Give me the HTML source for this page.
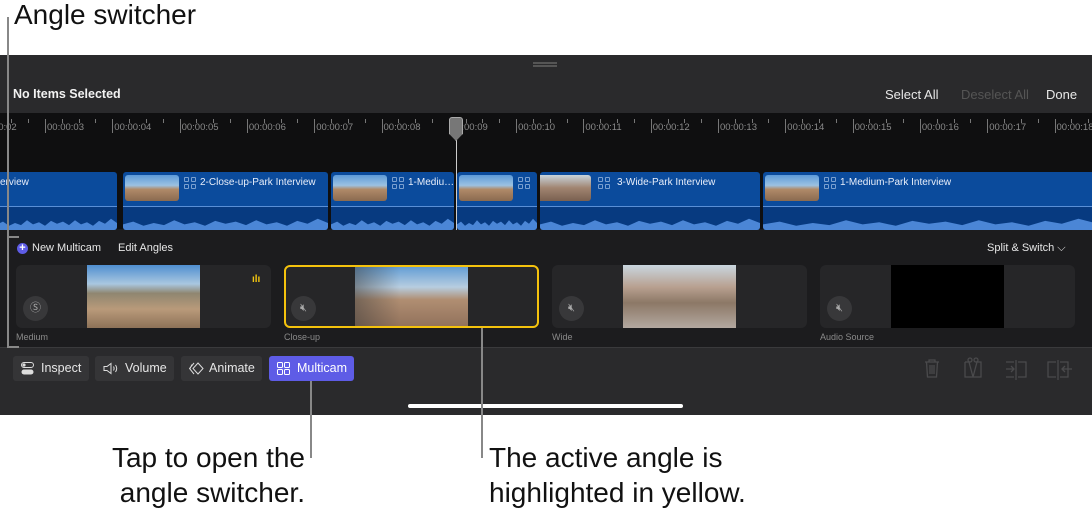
<!DOCTYPE html>
<html><head><meta charset="utf-8"><style>
*{margin:0;padding:0;box-sizing:border-box}
body{width:1092px;height:522px;background:#fff;position:relative;overflow:hidden;font-family:"Liberation Sans",sans-serif}
.a{position:absolute}
.ann{font-size:28px;color:#111;line-height:35px}
.tick{position:absolute;top:119px;width:1px;height:14px;background:#777}
.tl{position:absolute;top:122px;font-size:9.5px;color:#8a8a8a}
.clip{position:absolute;top:172px;height:58px;background:#0b4b9c;border-radius:3px;overflow:hidden}
.clip .wv{position:absolute;left:0;right:0;top:34px;bottom:0;background:#073a80;border-top:1px solid #5a8fd6}
.clip .wv i{position:absolute;left:0;right:0;bottom:0;height:14px;background:#4b86d6;clip-path:polygon(0 60%,5% 40%,10% 70%,15% 50%,20% 65%,25% 30%,30% 60%,35% 45%,40% 70%,45% 35%,50% 55%,55% 40%,60% 65%,65% 30%,70% 60%,75% 45%,80% 70%,85% 35%,90% 55%,95% 20%,100% 50%,100% 100%,0 100%)}
.thumb{position:absolute;top:3px;width:54px;height:26px;border-radius:3px;background:linear-gradient(#5d9ad8 0%,#9cc2e2 40%,#b08a68 55%,#8a6a50 100%)}
.ct{position:absolute;top:5px;font-size:10px;color:#e8eefa;white-space:nowrap}
.gi{position:absolute;top:5px;width:12px;height:12px;display:grid;grid-template-columns:5px 5px;gap:2px}
.gi b{border:1px solid #7aa0d0;border-radius:1px}
.card{position:absolute;top:265px;width:255px;height:63px;background:#262628;border-radius:6px;overflow:hidden}
.card .im{position:absolute;left:71px;top:0;width:113px;height:63px}
.card .mb{position:absolute;left:7px;top:31px;width:25px;height:25px;border-radius:50%;background:#38383a;color:#aaa;font-size:11px;text-align:center;line-height:25px}
.lab{position:absolute;top:332px;font-size:9px;color:#8a8a8a}
.btn{position:absolute;top:356px;height:25px;border-radius:3px;background:#353537;color:#e6e6e6;font-size:12.5px;line-height:25px;padding-left:28px}
.btn svg{position:absolute;left:8px;top:6px}
</style></head><body>
<div class="a ann" style="left:14px;top:-3px">Angle switcher</div>

<div class="a" style="left:0;top:55px;width:1092px;height:360px;background:#2a2a2c"></div>
<div class="a" style="left:533px;top:62px;width:24px;height:2px;background:#555;box-shadow:0 3px 0 #555"></div>
<div class="a" style="left:13px;top:87px;font-size:12.5px;font-weight:bold;color:#f2f2f2">No Items Selected</div>
<div class="a" style="left:885px;top:87px;font-size:13px;color:#e8e8e8">Select All</div>
<div class="a" style="left:961px;top:87px;font-size:13px;color:#555">Deselect All</div>
<div class="a" style="left:1046px;top:87px;font-size:13px;color:#e8e8e8">Done</div>

<div class="a" style="left:0;top:113px;width:1092px;height:119px;background:#0f0f10"></div>
<div id="ruler"></div>
<div class="a" style="left:0;top:229px;width:1092px;height:3px;background:#1c1c1e"></div>

<div class="clip" style="left:-3px;width:120px"><div class="ct" style="left:3px">erview</div><div class="wv"><i></i></div></div>
<div class="clip" style="left:123px;width:205px"><div class="thumb" style="left:2px"></div><div class="gi" style="left:61px"><b></b><b></b><b></b><b></b></div><div class="ct" style="left:77px">2-Close-up-Park Interview</div><div class="wv"><i></i></div></div>
<div class="clip" style="left:331px;width:123px"><div class="thumb" style="left:2px"></div><div class="gi" style="left:61px"><b></b><b></b><b></b><b></b></div><div class="ct" style="left:77px">1-Mediu…</div><div class="wv"><i></i></div></div>
<div class="clip" style="left:457px;width:80px"><div class="thumb" style="left:2px"></div><div class="gi" style="left:61px"><b></b><b></b><b></b><b></b></div><div class="wv"><i></i></div></div>
<div class="clip" style="left:540px;width:220px"><div class="thumb" style="left:-3px;width:54px;background:linear-gradient(#c8d4dc,#a08470 50%,#7a6050)"></div><div class="gi" style="left:58px"><b></b><b></b><b></b><b></b></div><div class="ct" style="left:77px">3-Wide-Park Interview</div><div class="wv"><i></i></div></div>
<div class="clip" style="left:763px;width:332px"><div class="thumb" style="left:2px"></div><div class="gi" style="left:61px"><b></b><b></b><b></b><b></b></div><div class="ct" style="left:77px">1-Medium-Park Interview</div><div class="wv"><i></i></div></div>

<div class="a" style="left:456px;top:117px;width:1px;height:113px;background:#ccc"></div>
<div class="a" style="left:449px;top:117px;width:14px;height:24px;background:#777;border:1px solid #aaa;clip-path:polygon(0 0,100% 0,100% 70%,50% 100%,0 70%);border-radius:3px"></div>

<div class="a" style="left:0;top:232px;width:1092px;height:116px;background:#1c1c1e"></div>
<div class="a" style="left:17px;top:243px;width:11px;height:11px;border-radius:50%;background:#5e5ce6;color:#fff;font-size:11px;line-height:11px;text-align:center;font-weight:bold">+</div>
<div class="a" style="left:32px;top:242px;font-size:11px;color:#e6e6e6">New Multicam</div>
<div class="a" style="left:118px;top:242px;font-size:11px;color:#e6e6e6">Edit Angles</div>
<div class="a" style="left:987px;top:242px;font-size:11px;color:#e6e6e6">Split &amp; Switch ⌵</div>

<div class="card" style="left:16px"><div class="im" style="background:linear-gradient(#4f8fd0 0%,#a9c7e0 30%,#8f8670 45%,#b99a7a 70%,#8d7258 100%)"></div><div class="mb">Ⓢ</div><div class="a" style="left:236px;top:9px;color:#f1c40f;font-size:10px;font-weight:bold">ılı</div></div>
<div class="card" style="left:284px;border:2px solid #f4c20d"><div class="im" style="left:69px;top:-2px;background:linear-gradient(90deg,rgba(60,60,60,.5),transparent 40%),linear-gradient(#5c9ad4 0%,#b7cde0 35%,#b08e72 55%,#90705a 100%)"></div><div class="mb" style="left:5px;top:29px">🔇︎</div></div>
<div class="card" style="left:552px"><div class="im" style="background:linear-gradient(#c9d6df 0%,#b8a090 35%,#8c7866 60%,#b3a8a0 100%)"></div><div class="mb">🔇︎</div></div>
<div class="card" style="left:820px"><div class="im" style="background:#000"></div><div class="mb">🔇︎</div></div>
<div class="lab" style="left:16px">Medium</div>
<div class="lab" style="left:284px">Close-up</div>
<div class="lab" style="left:552px">Wide</div>
<div class="lab" style="left:820px">Audio Source</div>

<div class="a" style="left:0;top:347px;width:1092px;height:1px;background:#3a3a3c"></div>
<div class="btn" style="left:13px;width:76px"><svg width="13" height="13" viewBox="0 0 13 13"><rect x="0.5" y="0.5" width="12" height="5" rx="2.5" fill="none" stroke="#ddd"/><circle cx="3" cy="3" r="1.6" fill="#ddd"/><rect x="0.5" y="7.5" width="12" height="5" rx="2.5" fill="#ddd"/></svg>Inspect</div>
<div class="btn" style="left:95px;width:79px;padding-left:30px"><svg width="16" height="13" viewBox="0 0 16 13"><path d="M1 4.5h3l4-3v10l-4-3H1z" fill="none" stroke="#ddd"/><path d="M10.5 4.5q1.2 2 0 4M12.5 3q2.4 3.5 0 7" fill="none" stroke="#ddd"/></svg>Volume</div>
<div class="btn" style="left:181px;width:81px"><svg width="15" height="13" viewBox="0 0 15 13"><path d="M9 1l5 5.5-5 5.5-5-5.5zM5 1L0.5 6.5 5 12M3 2.5L1 6.5" fill="none" stroke="#ddd"/></svg>Animate</div>
<div class="btn" style="left:269px;width:85px;background:#5e5ce6;color:#fff"><svg width="13" height="13" viewBox="0 0 13 13" fill="none" stroke="#fff"><rect x=".5" y=".5" width="5" height="5" rx="1"/><rect x="7.5" y=".5" width="5" height="5" rx="1"/><rect x=".5" y="7.5" width="5" height="5" rx="1"/><rect x="7.5" y="7.5" width="5" height="5" rx="1"/></svg>Multicam</div>

<svg class="a" style="left:920px;top:356px" width="160" height="26" fill="none" stroke="#4a4a4c" stroke-width="1.3">
<path d="M5 6h14M9 6V4h6v2M6.5 6l1 15h9l1-15M10 9v9M12 9v9M14 9v9"/>
<path d="M45 6v15h16V6h-4M49 6h-4M49 6l4 15M57 6l-4 15"/><circle cx="50" cy="4" r="2"/><circle cx="56" cy="4" r="2"/>
<path d="M96 4v20M98 6h8v15h-8M86 6h8M86 21h8M86 13h8M91 10l3 3-3 3"/>
<path d="M138 4v20M136 6h-8v15h8M140 6h8v15h-8M152 13h-10M145 10l-3 3 3 3"/>
</svg>

<div class="a" style="left:408px;top:404px;width:275px;height:4px;border-radius:2px;background:#fff"></div>

<div class="a" style="left:7px;top:17px;width:2px;height:331px;background:#888"></div>
<div class="a" style="left:7px;top:236px;width:12px;height:2px;background:#888"></div>
<div class="a" style="left:7px;top:346px;width:12px;height:2px;background:#888"></div>
<div class="a" style="left:310px;top:381px;width:2px;height:77px;background:#888"></div>
<div class="a" style="left:481px;top:328px;width:2px;height:130px;background:#888"></div>
<div class="a ann" style="left:40px;top:440px;width:265px;text-align:right">Tap to open the<br>angle switcher.</div>
<div class="a ann" style="left:489px;top:440px">The active angle is<br>highlighted in yellow.</div>

<script>
var r=document.getElementById('ruler'),h='';
for(var n=2;n<=18;n++){var x=47+67.3*(n-3);
h+='<div class="tick" style="left:'+(x-2)+'px"></div><div class="tl" style="left:'+x+'px">00:00:'+(n<10?'0':'')+n+'</div>';
for(var k=1;k<4;k++)h+='<div class="tick" style="left:'+(x-2+k*16.8)+'px;height:4px"></div>';}
r.innerHTML=h;
</script>
</body></html>
